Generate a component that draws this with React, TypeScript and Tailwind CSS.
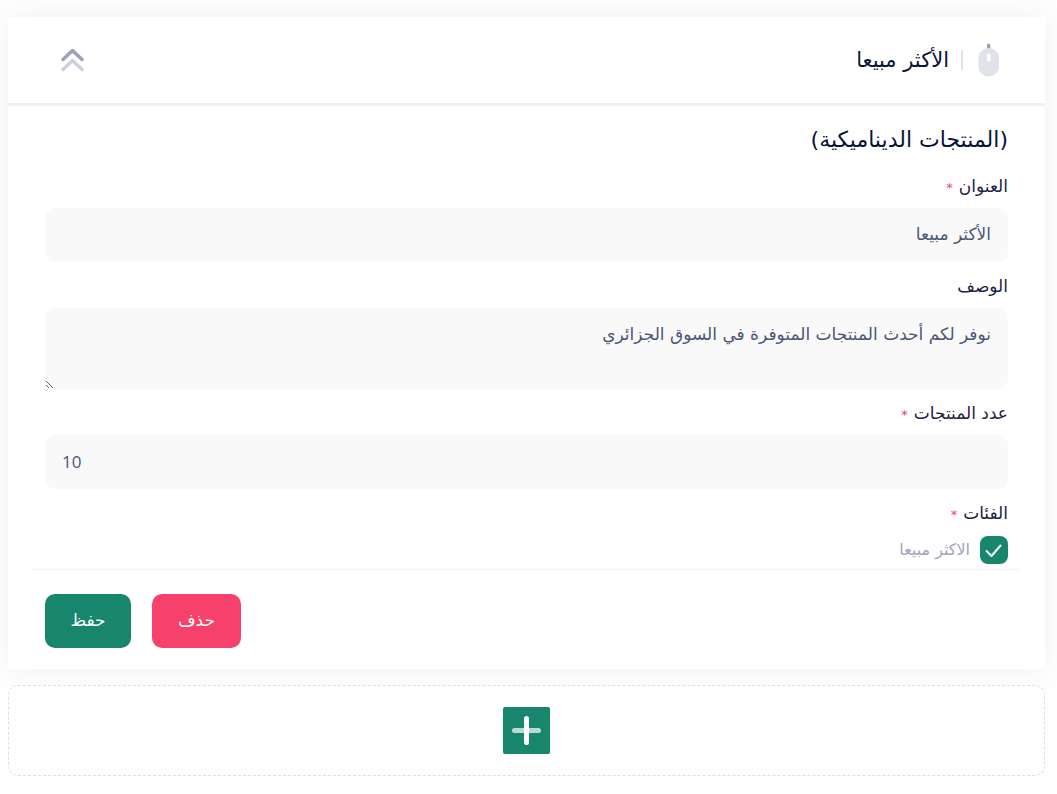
import { useState } from 'react';
import type { ReactNode } from 'react';

type LabelProps = {
  htmlFor?: string;
  required?: boolean;
  children: ReactNode;
};

const fieldClass =
  'block w-full rounded-[10px] bg-[#f9f9f9] px-[17px] text-[17px] text-[#4b5675] outline-none';

function Asterisk() {
  return <span className="mr-1.5 text-[13px] leading-none text-[#f1416c]">*</span>;
}

function FieldLabel({ htmlFor, required, children }: LabelProps) {
  return (
    <label
      htmlFor={htmlFor}
      className="mt-3 mb-[10px] block w-fit text-[17px] leading-6 font-medium text-[#212144]"
    >
      {children}
      {required && <Asterisk />}
    </label>
  );
}

function MouseIcon() {
  return (
    <svg width="22" height="34" viewBox="0 0 22 34" aria-hidden="true">
      <rect x="9" y="0.5" width="3.4" height="8" rx="1.7" fill="#9a9fba" />
      <path
        fill="#e1e3ea"
        fillRule="evenodd"
        d="M10.7 5C16.4 5 21 9.400 21 15v8.500C21 29.100 16.400 33.500 10.700 33.500S.4 29.100.4 23.500V15C.4 9.400 5 5 10.700 5Zm0 5.500a1.900 1.900 0 0 0-1.900 1.900v4.200a1.900 1.900 0 0 0 3.800 0v-4.200a1.900 1.900 0 0 0-1.900-1.900Z"
      />
    </svg>
  );
}

function ChevronsIcon() {
  return (
    <svg
      width="24"
      height="24"
      viewBox="0 0 24 24"
      fill="none"
      stroke="#9a9fba"
      strokeWidth="3.4"
      strokeLinecap="round"
      strokeLinejoin="round"
      aria-hidden="true"
    >
      <path d="M2 11.500 11.500 2.500 21 11.500" />
      <path d="M2 21.500 11.500 12.500 21 21.500" opacity="0.5" />
    </svg>
  );
}

function PlusIcon() {
  return (
    <svg width="47" height="47" viewBox="0 0 47 47" aria-hidden="true">
      <rect width="47" height="47" rx="2" fill="#17866d" />
      <rect x="9" y="21" width="29" height="5" rx="2.500" fill="#fff" opacity="0.7" />
      <rect x="21" y="9" width="5" height="29" rx="2.500" fill="#fff" />
    </svg>
  );
}

export default function App() {
  const [open, setOpen] = useState(true);

  return (
    <main
      dir="rtl"
      className="min-h-screen bg-[#fefefe] pt-[17px] pr-3 pb-[18px] pl-2 font-['DejaVu_Sans',sans-serif]"
    >
      <section className="bg-white shadow-[0_0_30px_rgba(0,0,0,0.06)]">
        <header className="flex h-[89px] items-center justify-between border-b-[3px] border-[#f1f1f2] pr-[45px] pl-[53px]">
          <div className="flex items-center">
            <MouseIcon />
            <span className="mr-[15px] ml-3 h-5 w-0.5 bg-[#e1e3ea]" />
            <h2 className="text-[21px] leading-8 text-[#071437]">الأكثر مبيعا</h2>
          </div>
          <button type="button" aria-label="طي" aria-expanded={open} onClick={() => setOpen(!open)}>
            <ChevronsIcon />
          </button>
        </header>

        {open && (
          <form className="pt-[18px] pb-[21px]" onSubmit={(e) => e.preventDefault()}>
            <div className="px-[37px]">
              <h3 className="mb-[18px] text-[22px] leading-8 font-medium text-[#071437]">
                (المنتجات الديناميكية)
              </h3>

              <FieldLabel htmlFor="title" required>
                العنوان
              </FieldLabel>
              <input
                id="title"
                type="text"
                defaultValue="الأكثر مبيعا"
                className={`${fieldClass} h-[54px] pb-0.5`}
              />

              <FieldLabel htmlFor="description">الوصف</FieldLabel>
              <textarea
                id="description"
                defaultValue="نوفر لكم أحدث المنتجات المتوفرة في السوق الجزائري"
                className={`${fieldClass} h-[81px] resize py-[14px] leading-6`}
              />

              <FieldLabel htmlFor="count" required>
                عدد المنتجات
              </FieldLabel>
              <input
                id="count"
                type="text"
                inputMode="numeric"
                dir="ltr"
                defaultValue="10"
                className={`${fieldClass} h-[54px] pb-0.5 font-['Open_Sans',sans-serif]`}
              />

              <fieldset>
                <legend className="pt-3 text-[17px] leading-6 font-medium text-[#212144]">
                  الفئات
                  <Asterisk />
                </legend>
                <label className="mt-[11px] flex w-fit items-center gap-2.5 text-[16px] leading-6 text-[#a1a5b7]">
                  <span className="grid">
                    <input
                      type="checkbox"
                      defaultChecked
                      className="peer col-start-1 row-start-1 size-7 appearance-none rounded-lg bg-[#eff2f5] checked:bg-[#17866d]"
                    />
                    <svg
                      viewBox="0 0 28 28"
                      fill="none"
                      stroke="#fff"
                      strokeWidth="2"
                      strokeLinecap="round"
                      strokeLinejoin="round"
                      className="pointer-events-none invisible col-start-1 row-start-1 size-7 peer-checked:visible"
                      aria-hidden="true"
                    >
                      <path d="M6.500 15 11.500 20 20.500 9.500" />
                    </svg>
                  </span>
                  الاكثر مبيعا
                </label>
              </fieldset>
            </div>

            <hr className="mt-[5px] mr-[25px] ml-6 border-[#eff2f5]" />

            <div className="mt-6 flex justify-end gap-[21px] px-[37px]">
              <button
                type="button"
                className="h-[54px] w-[89px] rounded-[10px] bg-[#f5416c] text-[17px] font-medium text-white"
              >
                حذف
              </button>
              <button
                type="submit"
                className="h-[54px] w-[86px] rounded-[10px] bg-[#17866d] text-[17px] font-medium text-white"
              >
                حفظ
              </button>
            </div>
          </form>
        )}
      </section>

      <div className="mt-4 flex h-[91px] items-center justify-center rounded-[10px] border border-dashed border-[#dbdfe9] bg-[#fefefe]">
        <button type="button" aria-label="إضافة">
          <PlusIcon />
        </button>
      </div>
    </main>
  );
}
